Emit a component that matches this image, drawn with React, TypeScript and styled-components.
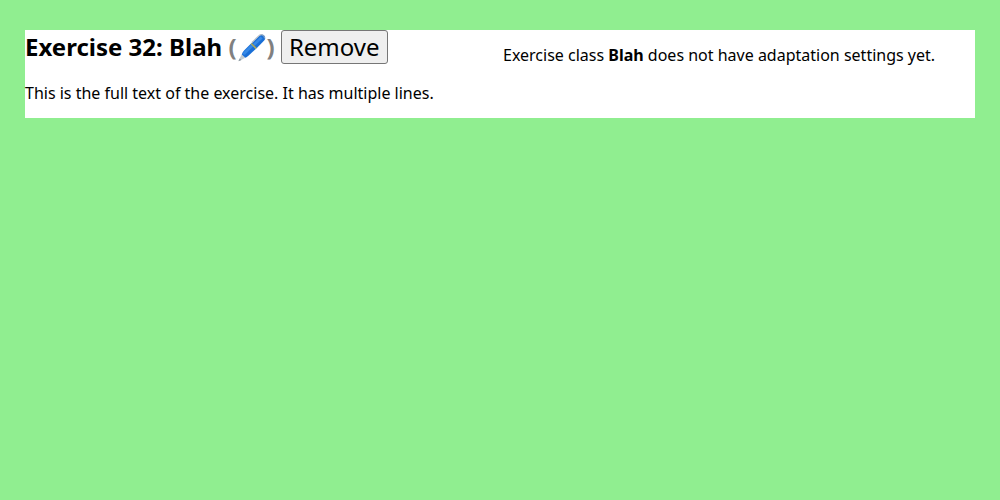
import React from "react";
import styled, { createGlobalStyle } from "styled-components";

const GlobalStyle = createGlobalStyle`
  body {
    margin: 0;
    background: #90ee90;
    color: #000;
    font-family: "Noto Sans", sans-serif;
    font-size: 16px;
    line-height: 22px;
  }
`;

const Page = styled.main`
  padding: 30px 25px;
`;

const Exercise = styled.section`
  display: grid;
  grid-template-columns: 1fr 1fr;
  gap: 6px;
  background: #fff;
`;

const Column = styled.div`
  display: flow-root;
`;

const Title = styled.h2`
  margin: 0 0 18px;
  font-size: 24px;
  line-height: 34px;
  white-space: nowrap;
`;

const EditMark = styled.span`
  color: #808080;
`;

const PenSvg = styled.svg`
  width: 30px;
  height: 34px;
  vertical-align: top;
`;

const RemoveButton = styled.button`
  height: 34px;
  padding: 0 7px;
  border: 1px solid #767676;
  border-radius: 3px;
  background: #efefef;
  color: #000;
  font: 24px/32px "Noto Sans", sans-serif;
  vertical-align: top;
`;

const Paragraph = styled.p`
  margin: 14px 0;
`;

function Pen() {
  return (
    <PenSvg viewBox="0 -2 30 34" role="img" aria-label="Edit">
      <path d="M1.6 29 L2.2 27.2 L5 22 L8.6 25.6 L3.4 28.6 Z" fill="#c3ccd2" />
      <path d="M1.4 29.2 L2.8 26.4 L4.4 28 Z" fill="#8a969d" />
      <path d="M4.8 22.4 Q5.2 20.6 6.6 19 L13.8 11.8 L19 16.8 L11.4 23.8 Q9.8 25.2 8.4 25.8 Z" fill="#1a6fd6" />
      <path d="M5.6 22.2 Q6 20.8 7.2 19.6 L14.2 12.6 L16.2 14.6 L8 22.8 Z" fill="#3689e6" />
      <path d="M14.2 11.4 L22.6 3.4 Q25.4 1.6 27.4 3.8 Q29.2 6 27.2 8.6 L19.4 16.4 Z" fill="#1a6fd6" />
      <path d="M16 12 L23.6 4.6 L25.6 6.4 L17.8 13.8 Z" fill="#3689e6" />
      <path d="M13.6 12 L14.8 10.9 L19.8 15.9 L18.6 17.1 Z" fill="#a5a45c" />
      <path d="M15.2 10.2 L22 3.6 Q23.8 2.2 25 2.8" fill="none" stroke="#b4bec6" strokeWidth="1.2" strokeLinecap="round" />
      <path d="M25 2.8 Q27.6 3.2 27.6 6" fill="none" stroke="#98aabd" strokeWidth="1" strokeLinecap="round" />
    </PenSvg>
  );
}

export default function App() {
  return (
    <>
      <GlobalStyle />
      <Page>
        <Exercise>
          <Column>
            <Title>
              Exercise 32: Blah{" "}
              <EditMark>
                (<Pen />)
              </EditMark>{" "}
              <RemoveButton type="button">Remove</RemoveButton>
            </Title>
            <Paragraph>This is the full text of the exercise. It has multiple lines.</Paragraph>
          </Column>
          <Column>
            <Paragraph>
              Exercise class <b>Blah</b> does not have adaptation settings yet.
            </Paragraph>
          </Column>
        </Exercise>
      </Page>
    </>
  );
}
